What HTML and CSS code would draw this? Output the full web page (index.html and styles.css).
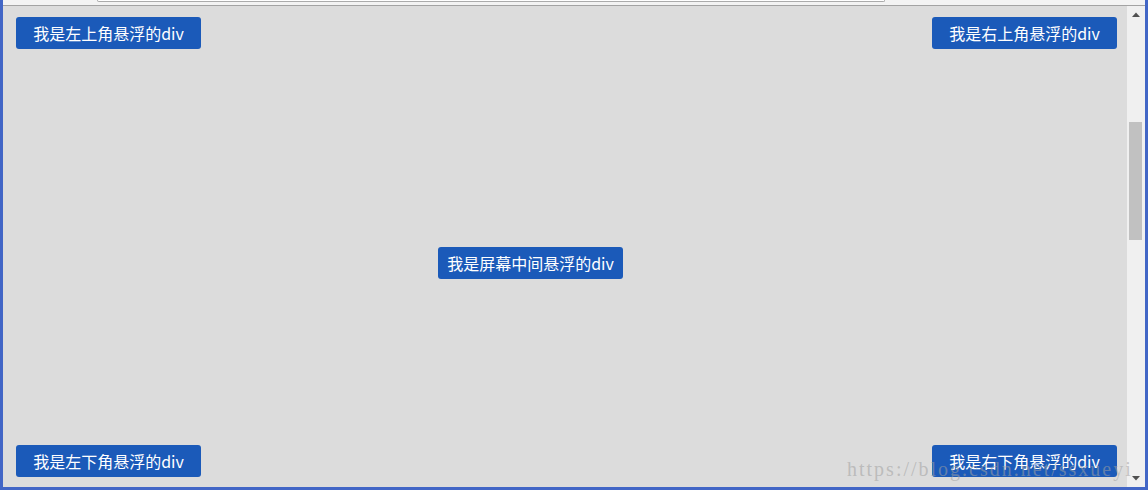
FILE: index.html
```html
<!DOCTYPE html>
<html lang="zh-CN">
<head>
<meta charset="utf-8">
<title>悬浮div</title>
<link rel="stylesheet" href="styles.css">
</head>
<body>
<div class="frame">
  <div class="toolbar"><div class="address"></div></div>
  <div class="main">
    <div class="viewport">
      <div class="row row-top">
        <div class="float-box">我是左上角悬浮的div</div>
        <div class="float-box">我是右上角悬浮的div</div>
      </div>
      <div class="row row-middle">
        <div class="float-box">我是屏幕中间悬浮的div</div>
      </div>
      <div class="row row-bottom">
        <div class="float-box">我是左下角悬浮的div</div>
        <div class="float-box">我是右下角悬浮的div</div>
      </div>
    </div>
    <div class="scrollbar">
      <div class="arrow"><svg width="8" height="5" viewBox="0 0 8 5"><path d="M0 5 L4 0.5 L8 5 Z" fill="#505050"/></svg></div>
      <div class="track"><div class="thumb"></div></div>
      <div class="arrow arrow-down"><svg width="8" height="5" viewBox="0 0 8 5"><path d="M0 0 L4 4.5 L8 0 Z" fill="#505050"/></svg></div>
    </div>
  </div>
</div>
<div class="watermark">https://blog.csdn.net/ssxueyi</div>
</body>
</html>
```

FILE: styles.css
```css
html, body {
  margin: 0;
  padding: 0;
  width: 1148px;
  height: 490px;
  overflow: hidden;
  background: #dcdcdc;
}

.frame {
  box-sizing: border-box;
  width: 1148px;
  height: 490px;
  display: flex;
  flex-direction: column;
  border-left: 3px solid #4266c6;
  border-right: 3px solid #4266c6;
  border-bottom: 3px solid #4266c6;
}

.toolbar {
  height: 5px;
  background: #f3f3f3;
  border-bottom: 1px solid #a3a3a3;
  display: flex;
  align-items: flex-start;
}

.address {
  margin-left: 94px;
  width: 786px;
  height: 1px;
  background: #ffffff;
  border: 1px solid #ababab;
  border-top: none;
  border-radius: 0 0 3px 3px;
}

.main {
  flex: 1;
  display: flex;
  min-height: 0;
}

.viewport {
  flex: 1;
  display: flex;
  flex-direction: column;
  padding: 11px 10px 10px 13px;
  background: #dcdcdc;
}

.row {
  display: flex;
  justify-content: space-between;
}

.row-middle {
  margin-top: 198px;
  padding-left: 422px;
}

.row-bottom {
  margin-top: auto;
}

.float-box {
  width: 185px;
  height: 32px;
  line-height: 32px;
  text-align: center;
  background: #1b5ab9;
  color: #ffffff;
  border-radius: 3px;
  font-family: "Noto Sans CJK SC", "Noto Sans", sans-serif;
  font-size: 16px;
}

.scrollbar {
  width: 18px;
  display: flex;
  flex-direction: column;
  background: #f0f0f0;
}

.arrow {
  height: 17px;
  display: flex;
  align-items: center;
  justify-content: center;
  padding-right: 1px;
}

.track {
  flex: 1;
  padding-top: 99px;
}

.thumb {
  margin-left: 2px;
  width: 13px;
  height: 118px;
  background: #c1c1c1;
}

.watermark {
  position: absolute;
  left: 847px;
  top: 459px;
  font-family: "Liberation Serif", serif;
  font-size: 20px;
  line-height: 20px;
  letter-spacing: 2px;
  color: rgba(160, 160, 160, 0.55);
  white-space: nowrap;
}
```
